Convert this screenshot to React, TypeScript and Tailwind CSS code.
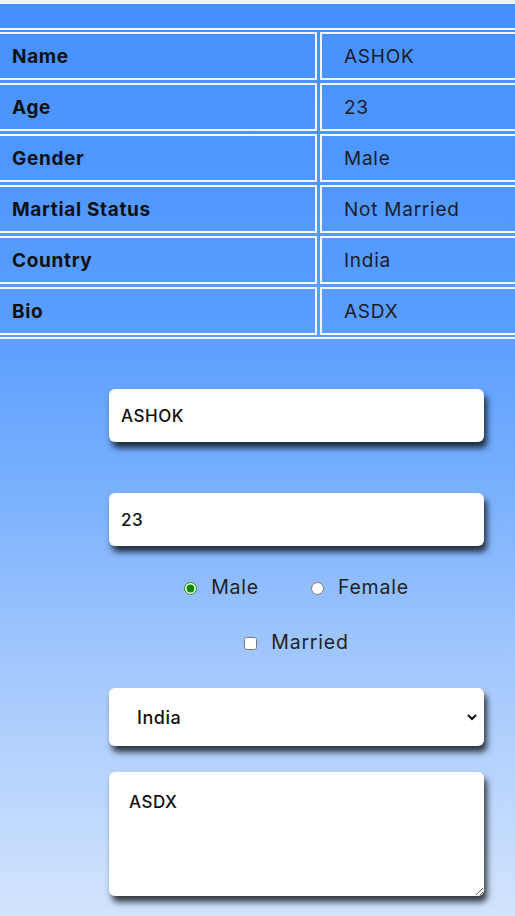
import React, { useState } from 'react';

const rows: [string, string][] = [
  ['Name', 'ASHOK'],
  ['Age', '23'],
  ['Gender', 'Male'],
  ['Martial Status', 'Not Married'],
  ['Country', 'India'],
  ['Bio', 'ASDX'],
];

const font = { fontFamily: 'Inter, "Open Sans", sans-serif' };

export default function App() {
  const [name, setName] = useState('ASHOK');
  const [age, setAge] = useState('23');
  const [gender, setGender] = useState('male');
  const [married, setMarried] = useState(false);
  const [country, setCountry] = useState('India');
  const [bio, setBio] = useState('ASDX');

  const field =
    'w-full bg-white rounded-[6px] shadow-[3px_6px_6px_rgba(0,0,0,0.75)] text-[17px] font-medium text-[#111] outline-none tracking-[0.03em]';

  return (
    <div
      className="w-[515px] h-[916px] overflow-hidden bg-[linear-gradient(to_bottom,#4590fe_0%,#5a9efe_36%,#7cb2fd_55%,#a4c8fd_73%,#d2e4fd_100%)]"
      style={font}
    >
      <div className="h-[4px] bg-[#edf2f6]" />
      <div className="h-[24px]" />

      {/* summary table */}
      <div className="-ml-[6px] w-[560px] border-y-2 border-[#f2f6ff] py-[2px] flex flex-col gap-[3px]">
        {rows.map(([label, value]) => (
          <div key={label} className="flex gap-[3px] h-[48px]">
            <div className="w-[323px] border-2 border-[#f2f6ff] flex items-center pl-[16px] pt-[2px] text-[19px] font-bold tracking-[0.035em] text-[#111]">
              {label}
            </div>
            <div className="flex-1 border-2 border-[#f2f6ff] flex items-center pl-[22px] pt-[2px] text-[19px] tracking-[0.04em] text-[#1c1c28]">
              {value}
            </div>
          </div>
        ))}
      </div>

      {/* form */}
      <form className="ml-[109px] w-[375px] mt-[50px] flex flex-col items-center">
        <input
          value={name}
          onChange={(e) => setName(e.target.value)}
          className={`${field} h-[53px] px-[12px]`}
          style={font}
        />
        <input
          value={age}
          onChange={(e) => setAge(e.target.value)}
          className={`${field} h-[53px] px-[12px] mt-[51px]`}
          style={font}
        />

        <div className="flex items-center h-[26px] mt-[29px] text-[19.5px] tracking-[0.04em] text-[#222]">
          <label className="flex items-center">
            <input
              type="radio"
              name="gender"
              checked={gender === 'male'}
              onChange={() => setGender('male')}
              className="m-0 w-[13px] h-[13px] accent-[#0b8a00]"
            />
            <span className="ml-[14px]">Male</span>
          </label>
          <label className="flex items-center ml-[52px]">
            <input
              type="radio"
              name="gender"
              checked={gender === 'female'}
              onChange={() => setGender('female')}
              className="m-0 w-[13px] h-[13px] accent-[#0b8a00]"
            />
            <span className="ml-[14px]">Female</span>
          </label>
        </div>

        <label className="flex items-center h-[26px] mt-[29px] text-[19.5px] tracking-[0.04em] text-[#222]">
          <input
            type="checkbox"
            checked={married}
            onChange={(e) => setMarried(e.target.checked)}
            className="m-0 w-[13px] h-[13px]"
          />
          <span className="ml-[14px]">Married</span>
        </label>

        <div className="relative w-full mt-[32px]">
          <select
            value={country}
            onChange={(e) => setCountry(e.target.value)}
            className={`${field} h-[58px] pl-[28px] appearance-none text-[18px]`}
            style={font}
          >
            <option>India</option>
            <option>USA</option>
            <option>UK</option>
          </select>
          <svg
            className="absolute right-[6px] top-[24px] pointer-events-none"
            width="12"
            height="10"
            viewBox="0 0 12 10"
          >
            <path d="M2 3 L6 7 L10 3" fill="none" stroke="#111" strokeWidth="2" />
          </svg>
        </div>

        <textarea
          value={bio}
          onChange={(e) => setBio(e.target.value)}
          className={`${field} h-[124px] mt-[26px] px-[20px] pt-[18px]`}
          style={font}
        />
      </form>
    </div>
  );
}
